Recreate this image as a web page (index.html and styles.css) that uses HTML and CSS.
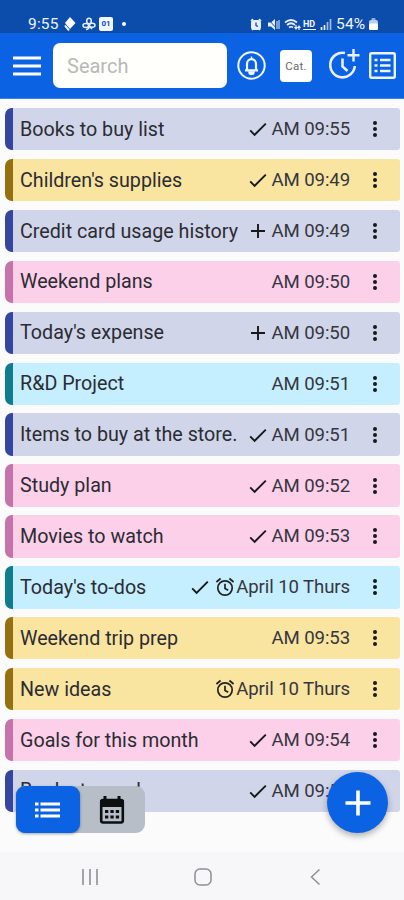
FILE: index.html
```
<!DOCTYPE html>
<html lang="en">
<head>
<meta charset="utf-8">
<title>Notes</title>
<link rel="stylesheet" href="styles.css">
</head>
<body>
<svg class="defs" width="0" height="0" aria-hidden="true">
  <symbol id="check" viewBox="0 0 18 18"><path d="M1.2 10.4 5.6 14.8 16.8 3.6" fill="none" stroke="currentColor" stroke-width="1.9"/></symbol>
  <symbol id="plus" viewBox="0 0 18 18"><path d="M9 2v14M2 9h14" fill="none" stroke="currentColor" stroke-width="1.9"/></symbol>
  <symbol id="alarm" viewBox="0 0 20 20"><g fill="none" stroke="currentColor" stroke-width="1.7"><circle cx="10" cy="11" r="7.2"/><path d="M10 6.8v4.6l3.2 1.9M1.4 5 5.6 1.5M18.6 5 14.4 1.5"/></g></symbol>
  <symbol id="more" viewBox="0 0 6 18"><g fill="currentColor"><circle cx="3" cy="3" r="2"/><circle cx="3" cy="9" r="2"/><circle cx="3" cy="15" r="2"/></g></symbol>
</svg>
<div class="status">
  <div class="status-left">
    <span class="clock">9:55</span>
    <svg width="12" height="16" viewBox="0 0 12 16"><path d="M6 1l5.5 6L6 13 1 7z" fill="#fff"/><path d="M1 9.5 5 14.5" stroke="#fff" stroke-width="2"/></svg>
    <svg width="14" height="14" viewBox="0 0 14 14"><g fill="none" stroke="#e8efff" stroke-width="1.5"><ellipse cx="7" cy="4" rx="2.3" ry="2.8"/><ellipse cx="3.8" cy="8.5" rx="2.8" ry="2"/><ellipse cx="10.2" cy="8.2" rx="2.8" ry="2"/><path d="M7 6v3.5q0 3-3 3M8 10l2 2"/></g></svg>
    <span class="badge">01</span>
    <span class="dot"></span>
  </div>
  <div class="status-right">
    <svg width="12" height="13" viewBox="0 0 12 13"><rect x="1" y="2" width="10" height="10" rx="3" fill="#e9efff"/><path d="M1 3 3 1M11 3 9 1M2 12l1-1M10 12l-1-1" stroke="#e9efff" stroke-width="1.6"/><path d="M6 4.5V7.5l2 1" fill="none" stroke="#0c4dab" stroke-width="1.3"/></svg>
    <svg width="13" height="13" viewBox="0 0 13 13"><path d="M1 4.500h3l4-3.500v11L4 8.500H1z" fill="#e9efff"/><path d="M1 1l10 11" stroke="#0c4dab" stroke-width="1"/><path d="M10 3v8M12 2v9" stroke="#e9efff" stroke-width="1"/></svg>
    <svg width="17" height="13" viewBox="0 0 17 13"><g fill="none" stroke="#e9efff" stroke-width="1.7"><path d="M1 4.500q6-5 12 0M3 7q4-3.500 8 0M5 9.500q2-1.500 4 0"/><path d="M12 7v4M10.500 9l1.500 2 1.500-2M15 12V8M13.600 10 15 8l1.500 2" stroke-width="1.2"/></g></svg>
    <span class="hd">HD</span>
    <svg width="12" height="12" viewBox="0 0 12 12"><path d="M1.500 12V9M4.500 12V7" stroke="#e9efff" stroke-width="1.700"/><path d="M7.500 12V4M10.500 12V1" stroke="#9ebbea" stroke-width="1.700"/></svg>
    <span class="percent">54%</span>
    <svg width="9" height="12" viewBox="0 0 9 12"><rect x="2.500" width="4" height="3" rx="1" fill="#8fb0e4"/><rect y="2" width="9" height="10" rx="2" fill="#b9cdf0"/><rect y="5.500" width="9" height="6.500" rx="1.500" fill="#fff"/></svg>
  </div>
</div>
<header class="toolbar">
  <svg class="menu" width="28" height="20" viewBox="0 0 28 20"><path d="M0 2h28M0 10h28M0 18h28" stroke="#fff" stroke-width="3.200"/></svg>
  <input class="search" type="text" placeholder="Search" aria-label="Search">
  <svg class="bell" width="29" height="29" viewBox="0 0 29 29"><g fill="none" stroke="#f5f8ff" stroke-width="2"><circle cx="14.500" cy="14.500" r="13.200"/><path d="M8 19.300h13M10 19v-6a4.500 4.800 0 0 1 9 0v6" stroke-width="2.200"/></g><path d="M14.500 5.500v3M12 21h5a2.500 2.500 0 0 1-5 0z" fill="#f5f8ff" stroke="#f5f8ff" stroke-width="1.400"/></svg>
  <button class="cat">Cat.</button>
  <svg class="history" width="31" height="30" viewBox="0 0 31 30"><g fill="none" stroke="#e9f1ff"><path d="M16 4A12.300 12.300 0 1 0 25.800 17" stroke-width="2.600"/><path d="M13.500 9.500v8l5 4.500" stroke-width="2.600"/><path d="M24.500 0v12.500M18.500 6.200h12" stroke-width="2.400"/></g></svg>
  <svg class="listbox" width="27" height="27" viewBox="0 0 27 27"><rect x="1.200" y="1.200" width="24.600" height="24.600" rx="1.500" fill="none" stroke="#edf3ff" stroke-width="2.400"/><path d="M5.500 8h3M5.500 13.500h3M5.500 19h3M11 8h10.500M11 13.500h10.500M11 19h10.500" stroke="#edf3ff" stroke-width="2.500"/></svg>
</header>
<main class="list">
  <article class="row indigo"><h2>Books to buy list</h2><svg class="mark"><use href="#check"/></svg><time>AM 09:55</time><svg class="more"><use href="#more"/></svg></article>
  <article class="row gold"><h2>Children's supplies</h2><svg class="mark"><use href="#check"/></svg><time>AM 09:49</time><svg class="more"><use href="#more"/></svg></article>
  <article class="row indigo"><h2>Credit card usage history</h2><svg class="mark"><use href="#plus"/></svg><time>AM 09:49</time><svg class="more"><use href="#more"/></svg></article>
  <article class="row pink"><h2>Weekend plans</h2><time>AM 09:50</time><svg class="more"><use href="#more"/></svg></article>
  <article class="row indigo"><h2>Today's expense</h2><svg class="mark"><use href="#plus"/></svg><time>AM 09:50</time><svg class="more"><use href="#more"/></svg></article>
  <article class="row cyan"><h2>R&amp;D Project</h2><time>AM 09:51</time><svg class="more"><use href="#more"/></svg></article>
  <article class="row indigo"><h2>Items to buy at the store.</h2><svg class="mark"><use href="#check"/></svg><time>AM 09:51</time><svg class="more"><use href="#more"/></svg></article>
  <article class="row pink"><h2>Study plan</h2><svg class="mark"><use href="#check"/></svg><time>AM 09:52</time><svg class="more"><use href="#more"/></svg></article>
  <article class="row pink"><h2>Movies to watch</h2><svg class="mark"><use href="#check"/></svg><time>AM 09:53</time><svg class="more"><use href="#more"/></svg></article>
  <article class="row cyan"><h2>Today's to-dos</h2><svg class="mark"><use href="#check"/></svg><svg class="alarm"><use href="#alarm"/></svg><time class="date">April 10 Thurs</time><svg class="more"><use href="#more"/></svg></article>
  <article class="row gold"><h2>Weekend trip prep</h2><time>AM 09:53</time><svg class="more"><use href="#more"/></svg></article>
  <article class="row gold"><h2>New ideas</h2><svg class="alarm"><use href="#alarm"/></svg><time class="date">April 10 Thurs</time><svg class="more"><use href="#more"/></svg></article>
  <article class="row pink"><h2>Goals for this month</h2><svg class="mark"><use href="#check"/></svg><time>AM 09:54</time><svg class="more"><use href="#more"/></svg></article>
  <article class="row indigo"><h2>Books to read</h2><svg class="mark"><use href="#check"/></svg><time>AM 09:54</time><svg class="more"><use href="#more"/></svg></article>
</main>
<div class="switch">
  <button class="tab active" aria-label="List"><svg width="26" height="16" viewBox="0 0 26 16"><path d="M0 2h3.500M0 8h3.500M0 14h3.500M5.500 2H25M5.500 8H25M5.500 14H25" stroke="#fff" stroke-width="3"/></svg></button>
  <button class="tab" aria-label="Calendar"><svg width="26" height="28" viewBox="0 0 26 28"><rect x="2.200" y="4" width="21.600" height="22.500" rx="2" fill="none" stroke="#0c0e11" stroke-width="2.600"/><path d="M1 4h24v7H1zM4.500 0h3v5h-3zM18.500 0h3v5h-3z" fill="#0c0e11"/><path d="M6 15.500h3.300M11.400 15.500h3.300M16.800 15.500h3.300M6 21h3.300M11.400 21h3.300M16.800 21h3.300" stroke="#0c0e11" stroke-width="3.200"/></svg></button>
</div>
<button class="fab" aria-label="Add"><svg width="26" height="26" viewBox="0 0 26 26"><path d="M13 .5v25M.5 13h25" stroke="#fff" stroke-width="3.600"/></svg></button>
<nav class="navbar">
  <svg width="18" height="18" viewBox="0 0 18 18"><path d="M2 1v16M9 1v16M16 1v16" stroke="#a3a4a7" stroke-width="2"/></svg>
  <svg width="18" height="18" viewBox="0 0 18 18"><rect x="1" y="1" width="16" height="16" rx="5" fill="none" stroke="#8e8f92" stroke-width="1.500"/></svg>
  <svg width="18" height="18" viewBox="0 0 18 18"><path d="M12.500 1.500 4.500 9l8 7.500" fill="none" stroke="#8e8f92" stroke-width="1.500"/></svg>
</nav>
</body>
</html>
```
FILE: styles.css
```
* { box-sizing: border-box; }
body {
  margin: 0;
  width: 404px;
  height: 900px;
  overflow: hidden;
  display: flex;
  flex-direction: column;
  position: relative;
  background: #fbfbfc;
  font-family: Roboto, "Liberation Sans", sans-serif;
  color: #2b2c32;
}
svg { display: block; flex: none; }
.defs { position: absolute; }
button { border: 0; padding: 0; font: inherit; }

.status {
  height: 33px;
  flex: none;
  background: #0c4dab;
  color: #f0f4ff;
  display: flex;
  justify-content: space-between;
  padding: 14px 26px 0 28px;
}
.status-left, .status-right { display: flex; align-items: center; height: 20px; }
.clock { font-size: 15.5px; width: 36px; letter-spacing: .2px; }
.status-left svg + svg { margin-left: 6px; }
.badge {
  width: 14px; height: 14px; margin-left: 3px;
  border-radius: 2px; background: #f2f6ff; color: #0c4dab;
  font-size: 8px; font-weight: 700; line-height: 14px; text-align: center;
}
.dot { width: 4px; height: 4px; border-radius: 50%; background: #fff; margin-left: 9px; }
.status-right svg:nth-child(2) { margin-left: 5px; }
.status-right svg:nth-child(3) { margin-left: 4px; }
.hd { font-size: 9px; font-weight: 700; line-height: 10px; width: 13px; margin: 0 4px 0 2px; border-bottom: 1px solid #e9efff; }
.percent { font-size: 15.5px; letter-spacing: .2px; width: 31px; margin: 0 2px 0 4px; white-space: nowrap; }

.toolbar {
  height: 66px;
  flex: none;
  background: #0b62e3;
  display: flex;
  align-items: center;
  padding-left: 13px;
  border-bottom: 1px solid #3d83e6;
}
.search {
  width: 174px; height: 45px; margin-left: 12px;
  border: 0; border-radius: 7px; background: #fffffc;
  padding: 0 14px; font: 20px Roboto, "Liberation Sans", sans-serif;
}
.search::placeholder { color: #b9b8b6; opacity: 1; }
.bell { margin-left: 10px; }
.cat {
  width: 32px; height: 32px; margin-left: 14px;
  border-radius: 4px; background: #fff; color: #68696c; font-size: 11.5px; letter-spacing: .3px;
}
.history { margin: -3px 0 0 17px; }
.listbox { margin-left: 9px; }

.list {
  display: flex;
  flex-direction: column;
  gap: 8.5px;
  padding: 9px 4px 0 5px;
}
.row {
  height: 42.42px;
  flex: none;
  display: flex;
  align-items: center;
  padding: 0 22px 0 7px;
  border-left: 8px solid;
  border-radius: 7px 3px 3px 7px;
}
.row h2 {
  margin: 0 auto 0 0;
  font-size: 19.7px;
  font-weight: 400;
  white-space: nowrap;
}
.row time { font-size: 20px; letter-spacing: -.1px; font-size: 18.6px; white-space: nowrap; margin-left: 5px; color: #36373e; }
.row .date { margin-left: 1px; }
.mark { width: 18px; height: 18px; color: #17181c; }
.alarm { width: 20px; height: 20px; margin-left: 6px; color: #222; }
.row .more { width: 6px; height: 18px; margin-left: 22px; color: #17181c; }
.indigo { background: #d1d5ea; border-color: #3446a0; }
.gold { background: #f9e4a0; border-color: #94710e; }
.pink { background: #fdd0ea; border-color: #c573aa; }
.cyan { background: #c5eefe; border-color: #0f7d8f; }

.switch {
  position: absolute;
  left: 16px; top: 786px;
  width: 129px; height: 47px;
  display: flex;
  border-radius: 9px;
  background: #b7bec8;
}
.tab {
  width: 64px; height: 47px;
  display: flex; align-items: center; justify-content: center;
  border-radius: 9px;
  background: none;
}
.active { background: #0b62e3; box-shadow: 0 1px 3px rgba(0, 0, 0, .35); }
.fab {
  position: absolute;
  left: 327px; top: 772px;
  width: 61px; height: 61px;
  border-radius: 50%;
  background: #0b62e3;
  box-shadow: 0 3px 6px rgba(0, 0, 0, .3);
  display: flex; align-items: center; justify-content: center;
}
.navbar {
  margin-top: auto;
  height: 48px;
  flex: none;
  background: #f7f7f9;
  display: flex;
  justify-content: space-between;
  align-items: center;
  padding: 2px 79px 0 81px;
}
```
